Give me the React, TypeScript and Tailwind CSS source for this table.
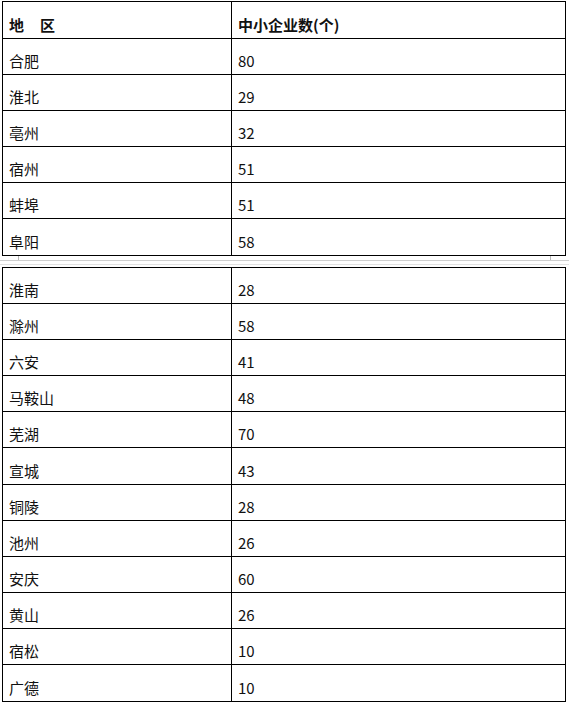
const firstPart: [string, string][] = [
  ["合肥", "80"],
  ["淮北", "29"],
  ["亳州", "32"],
  ["宿州", "51"],
  ["蚌埠", "51"],
  ["阜阳", "58"],
];

const secondPart: [string, string][] = [
  ["淮南", "28"],
  ["滁州", "58"],
  ["六安", "41"],
  ["马鞍山", "48"],
  ["芜湖", "70"],
  ["宣城", "43"],
  ["铜陵", "28"],
  ["池州", "26"],
  ["安庆", "60"],
  ["黄山", "26"],
  ["宿松", "10"],
  ["广德", "10"],
];

const Row = ({ left, right, last, bold, h }: { left: React.ReactNode; right: React.ReactNode; last?: boolean; bold?: boolean; h: string }) => (
  <div className={`grid grid-cols-[229px_1fr] ${h} ${last ? "" : "border-b border-black"} ${bold ? "font-bold" : ""}`}>
    <div className="flex items-end border-r border-black pl-[6px] pb-[3px] leading-[20px]">{left}</div>
    <div className="flex items-end pl-[6px] pb-[3px] leading-[20px]">{right}</div>
  </div>
);

export default function App() {
  return (
    <div
      lang="zh-CN"
      className="w-[569px] h-[704px] bg-white pt-[1px] text-[15px] text-[#111111]"
      style={{ fontFamily: '"Noto Sans CJK SC", "Noto Sans", sans-serif' }}
    >
      {/* first page */}
      <div className="mx-[2px] w-[564px] border border-black">
        <Row
          h="h-[37px]"
          bold
          left={
            <span>
              地<span className="ml-[16px]">区</span>
            </span>
          }
          right="中小企业数(个)"
        />
        {firstPart.map(([city, n], i) => (
          <Row key={city} h="h-[36px]" left={city} right={n} last={i === firstPart.length - 1} />
        ))}
      </div>

      {/* page break */}
      <div className="h-[11px] flex flex-col">
        <div className="h-[4px] flex justify-between pl-[18px] pr-[18px]">
          <div className="w-px h-full bg-[#b8b8b8]" />
          <div className="w-px h-full bg-[#b8b8b8]" />
        </div>
        <div className="border-t border-[#cfcfcf]" />
        <div className="h-[3px]" />
        <div className="border-t border-[#e2e2e2]" />
      </div>

      {/* second page */}
      <div className="mx-[2px] w-[564px] border border-black">
        {secondPart.map(([city, n], i) => (
          <Row key={city} h="h-[36.1px]" left={city} right={n} last={i === secondPart.length - 1} />
        ))}
      </div>
    </div>
  );
}
